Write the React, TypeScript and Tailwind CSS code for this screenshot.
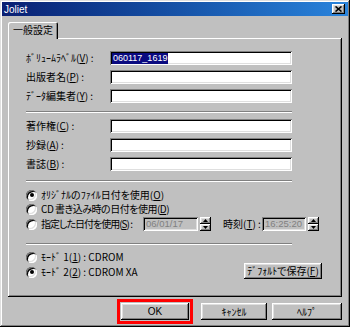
import React from "react";

const raised = "shadow-[inset_-1px_-1px_#000,inset_1px_1px_#fff,inset_-2px_-2px_#808080,inset_2px_2px_#dfdfdf]";
const sunken = "shadow-[inset_1px_1px_#808080,inset_-1px_-1px_#fff,inset_2px_2px_#000,inset_-2px_-2px_#dfdfdf]";
const jp = "[font-family:'Noto_Sans_CJK_JP',sans-serif] [font-feature-settings:'palt'] text-[10px] leading-none text-black";
const lat = "[font-family:'Liberation_Sans',Arial,sans-serif]";

function Sep() {
    return <div className="h-[2px] w-[266px] border-t border-t-[#808080] border-b border-b-white"/>;
}

function Field({label, children}: { label: React.ReactNode; children?: React.ReactNode }) {
    return (
        <div className="flex items-center h-[14px]">
            <div className={`w-[84px] whitespace-nowrap ${jp}`}>{label}</div>
            <div className={`w-[182px] h-[14px] bg-white flex items-center px-[2px] ${sunken}`}>{children}</div>
        </div>
    );
}

function Radio({checked}: { checked?: boolean }) {
    return (
        <span
            className={`w-[11px] h-[11px] rounded-full bg-white shrink-0 flex items-center justify-center shadow-[inset_1px_1px_#808080,inset_-1px_-1px_#fff,inset_2px_2px_#000,inset_-2px_-2px_#dfdfdf]`}>
            {checked && <span className="w-[4px] h-[4px] rounded-full bg-black"/>}
        </span>
    );
}

function Spin() {
    return (
        <div className="flex flex-col w-[11px] h-[14px] ml-[2px] shrink-0">
            <div className={`h-[7px] flex items-center justify-center bg-[#c0c0c0] ${raised}`}>
                <svg width="5" height="3" viewBox="0 0 5 3"><polygon points="2.5,0 5,3 0,3" fill="#000"/></svg>
            </div>
            <div className={`h-[7px] flex items-center justify-center bg-[#c0c0c0] ${raised}`}>
                <svg width="5" height="3" viewBox="0 0 5 3"><polygon points="0,0 5,0 2.5,3" fill="#000"/></svg>
            </div>
        </div>
    );
}

export default function App() {
    return (
        <div className={`w-[350px] h-[327px] bg-[#c0c0c0] p-[2px] flex flex-col overflow-hidden shadow-[inset_-1px_-1px_#000,inset_1px_1px_#dfdfdf,inset_-2px_-2px_#808080,inset_2px_2px_#fff]`}>
            {/* title bar */}
            <div className="h-[14px] flex items-center justify-between bg-gradient-to-r from-[#0a1f73] to-[#2a84dc]">
                <span className={`pl-[2px] text-[10px] text-white ${lat}`}>Joliet</span>
                <button className={`w-[13px] h-[10px] mr-[3px] bg-[#c0c0c0] flex items-center justify-center ${raised}`}>
                    <svg width="7" height="6" viewBox="0 0 7 6">
                        <path d="M0.5 0.5L6.5 5.5M6.5 0.5L0.5 5.5" stroke="#000" strokeWidth="1.6"/>
                    </svg>
                </button>
            </div>

            <div className="px-[6px] mt-[6px] flex flex-col">
                {/* tab */}
                <div className={`relative z-10 -mb-[1px] w-[50px] h-[17px] bg-[#c0c0c0] rounded-t-[2px] flex items-start pt-[3px] pl-[5px] shadow-[inset_1px_1px_#fff,inset_-1px_0_#000,inset_-2px_0_#808080] ${jp}`}>
                    一般設定
                </div>
                {/* panel */}
                <div className={`w-[334px] h-[259px] bg-[#c0c0c0] pl-[18px] pt-[13px] flex flex-col shadow-[inset_-1px_-1px_#000,inset_1px_1px_#fff,inset_-2px_-2px_#808080]`}>
                    <div className="flex flex-col gap-[5px]">
                        <Field label={<>ﾎﾞﾘｭｰﾑﾗﾍﾞﾙ(<u>V</u>) :</>}>
                            <span className={`bg-[#0a0a80] text-white text-[9px] leading-[11px] px-[1px] ${lat}`}>060117_1619</span>
                        </Field>
                        <Field label={<>出版者名(<u>P</u>) :</>}/>
                        <Field label={<>ﾃﾞｰﾀ編集者(<u>Y</u>) :</>}/>
                    </div>
                    <div className="mt-[8px]"><Sep/></div>
                    <div className="flex flex-col gap-[5px] mt-[6px]">
                        <Field label={<>著作権(<u>C</u>) :</>}/>
                        <Field label={<>抄録(<u>A</u>) :</>}/>
                        <Field label={<>書誌(<u>B</u>) :</>}/>
                    </div>
                    <div className="mt-[9px]"><Sep/></div>
                    <div className="flex flex-col mt-[6px]">
                        <div className="flex items-center h-[14px]">
                            <Radio checked/>
                            <span className={`ml-[4px] whitespace-nowrap ${jp}`}>ｵﾘｼﾞﾅﾙのﾌｧｲﾙ日付を使用(<u>O</u>)</span>
                        </div>
                        <div className="flex items-center h-[14px]">
                            <Radio/>
                            <span className={`ml-[4px] whitespace-nowrap tracking-[-0.5px] ${jp}`}>CD 書き込み時の日付を使用(<u>D</u>)</span>
                        </div>
                        <div className="flex items-center h-[16px]">
                            <div className="w-[117px] shrink-0 flex items-center">
                                <Radio/>
                                <span className={`ml-[4px] whitespace-nowrap tracking-[-1px] ${jp}`}>指定した日付を使用(<u>S</u>) :</span>
                            </div>
                            <div className={`w-[55px] h-[14px] shrink-0 bg-[#c0c0c0] flex items-center pl-[3px] text-[9.5px] text-[#808080] ${lat} ${sunken}`}>06/01/17</div>
                            <Spin/>
                            <span className={`ml-[12px] w-[39px] shrink-0 whitespace-nowrap ${jp}`}>時刻(<u>T</u>) :</span>
                            <div className={`w-[44px] h-[14px] shrink-0 bg-[#c0c0c0] flex items-center pl-[3px] text-[9.5px] text-[#808080] ${lat} ${sunken}`}>16:25:20</div>
                            <Spin/>
                        </div>
                    </div>
                    <div className="mt-[11px]"><Sep/></div>
                    <div className="mt-[5px] w-[296px] flex justify-between items-end">
                        <div className="flex flex-col gap-[1px]">
                            <div className="flex items-center h-[14px]">
                                <Radio/>
                                <span className={`ml-[4px] whitespace-nowrap ${jp}`}>ﾓｰﾄﾞ 1(<u>1</u>) : CDROM</span>
                            </div>
                            <div className="flex items-center h-[14px]">
                                <Radio checked/>
                                <span className={`ml-[4px] whitespace-nowrap ${jp}`}>ﾓｰﾄﾞ 2(<u>2</u>) : CDROM XA</span>
                            </div>
                        </div>
                        <button className={`w-[78px] h-[16px] bg-[#c0c0c0] flex items-center justify-center ${jp} ${raised}`}>
                            ﾃﾞﾌｫﾙﾄで保存(<u>F</u>)
                        </button>
                    </div>
                </div>
            </div>

            {/* buttons */}
            <div className="mt-[2px] pl-[115px] flex items-center h-[25px]">
                <div className="w-[76px] h-[25px] border-[3px] border-[#ff0000] p-[1px]">
                    <button className={`w-full h-full bg-[#c0c0c0] flex items-center justify-center text-[10px] text-black ${lat} ${raised}`}>OK</button>
                </div>
                <button className={`ml-[8px] w-[66px] h-[17px] bg-[#c0c0c0] flex items-center justify-center ${jp} ${raised}`}>ｷｬﾝｾﾙ</button>
                <button className={`ml-[5px] w-[70px] h-[17px] bg-[#c0c0c0] flex items-center justify-center ${jp} ${raised}`}>ﾍﾙﾌﾟ</button>
            </div>
        </div>
    );
}
